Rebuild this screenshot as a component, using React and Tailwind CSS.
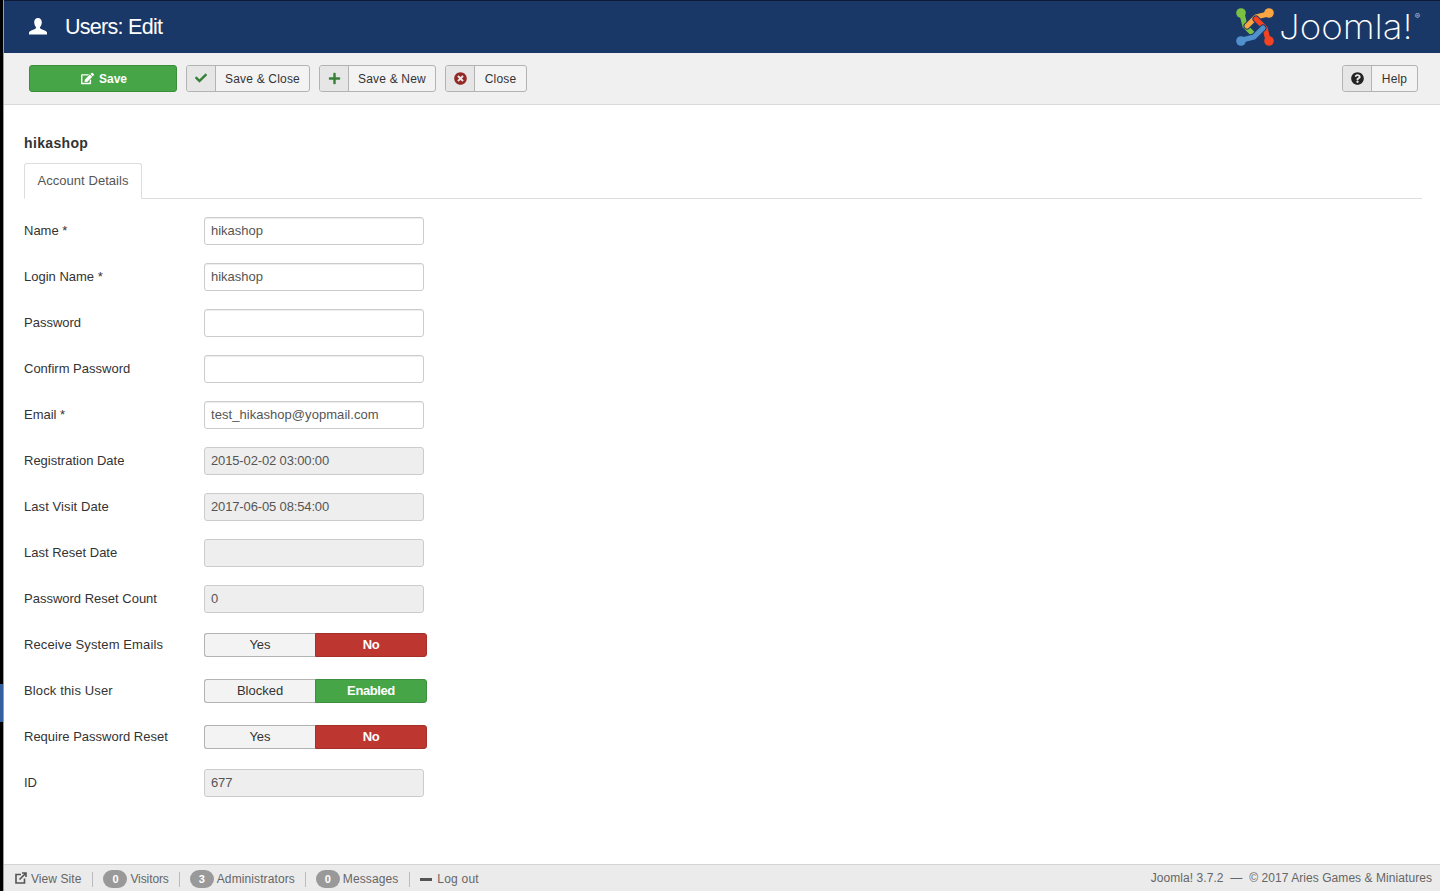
import React from "react";
import { FaEdit, FaCheck, FaPlus, FaTimesCircle, FaQuestionCircle } from "react-icons/fa";

const font = { fontFamily: '"Liberation Sans", Arial, sans-serif' };

const limbs = [
  { d: "M6 6 L9 18 L18 27", c: "#7ac143", x: 5, y: 5 },
  { d: "M32 6 L20 9 L11 18", c: "#f9a541", x: 33, y: 5 },
  { d: "M32 32 L29 20 L20 11", c: "#f44321", x: 33, y: 33 },
  { d: "M6 32 L18 29 L27 20", c: "#5091cd", x: 5, y: 33 },
];

function JoomlaMark() {
  return (
    <svg width="38" height="38" viewBox="0 0 38 38" fill="none" strokeLinecap="round" strokeLinejoin="round">
      {limbs.map((l) => (
        <g key={l.c}>
          <path d={l.d} stroke="#1a3867" strokeWidth="7" />
          <path d={l.d} stroke={l.c} strokeWidth="5.2" />
          <circle cx={l.x} cy={l.y} r="4.8" fill={l.c} />
        </g>
      ))}
    </svg>
  );
}

function ToolButton({ icon, label, width, iconW = "w-[29px]" }) {
  return (
    <div className={`flex h-[27px] ${width} rounded-[3px] border border-[#b3b3b3] bg-[#f3f3f3] text-[12px] text-[#333]`}>
      <span className={`flex ${iconW} shrink-0 items-center justify-center rounded-l-[3px] border-r border-[#b3b3b3] bg-[#e6e6e6]`}>{icon}</span>
      <span className="flex flex-1 items-center justify-center tracking-[0.18px]">{label}</span>
    </div>
  );
}

function Row({ label, labelClass = "", children }) {
  return (
    <div className="mb-[18px] flex h-[28px] items-center">
      <label className={`w-[180px] shrink-0 ${labelClass}`}>{label}</label>
      {children}
    </div>
  );
}

function Field({ value = "", disabled, valueClass = "" }) {
  return (
    <div className={`flex h-[28px] w-[220px] items-center rounded-[3px] border border-[#ccc] px-[6px] ${valueClass} ${disabled ? "bg-[#eeeeee] text-[#555]" : "bg-white text-[#555] shadow-[inset_0_1px_1px_rgba(0,0,0,0.075)]"}`}>
      {value}
    </div>
  );
}

function Toggle({ left, right, color }) {
  return (
    <div className="flex h-[24px] w-[223px] text-[#333]">
      <span className="flex w-[111px] items-center justify-center rounded-l-[3px] border border-r-0 border-[#b3b3b3] bg-[#f3f3f3]">{left}</span>
      <span className={`flex w-[112px] items-center justify-center rounded-r-[3px] border font-bold tracking-[-0.4px] text-white ${color}`}>{right}</span>
    </div>
  );
}

function Badge({ n }) {
  return <span className="flex h-[18px] w-[24px] items-center justify-center rounded-[9px] bg-[#999] text-[11px] font-bold text-white">{n}</span>;
}

const Sep = () => <span className="mx-[10px] h-[15px] w-px bg-[#bbb]" />;

export default function App() {
  return (
    <div className="relative flex h-[891px] w-full overflow-hidden bg-white text-[13px] text-[#333]" style={font}>
      <div className="relative w-[3px] shrink-0 bg-black">
        <span className="absolute left-0 top-[684px] h-[38px] w-[3px] bg-[#35609f]" />
      </div>
      <div className="flex min-w-0 flex-1 flex-col border-l border-[#8aa0b8]">
        <header className="flex h-[53px] shrink-0 items-center justify-between border-t border-[#0c1b33] bg-[#1a3867] pl-[25px] pr-[27px]">
          <div className="flex items-center pt-[1px] text-white">
            <svg width="18" height="17" viewBox="0 0 18 17" fill="currentColor" className="-mt-[3px]">
              <path d="M9 0C6.6 0 5.2 1.8 5.2 4.2C5.2 6.2 6 8 7 9C7.2 9.9 6.9 10.5 6 10.9C3.6 11.8 .6 12.5 0 14.4V16.6H18V14.4C17.4 12.5 14.4 11.8 12 10.9C11.1 10.5 10.8 9.9 11 9C12 8 12.8 6.2 12.8 4.2C12.8 1.8 11.4 0 9 0Z" />
            </svg>
            <h1 className="ml-[18px] text-[21.5px] leading-none tracking-[-0.72px]">Users: Edit</h1>
          </div>
          <div className="flex items-center">
            <JoomlaMark />
            <span className="relative ml-[5px] block w-[134px] text-[34px] font-extralight leading-none text-white" style={{ fontFamily: "Inter, sans-serif" }}>
              <span className="block origin-left scale-x-[1.08]">Joomla!</span>
              <span className="absolute -right-[7px] top-[2px] text-[8px] font-normal text-[#b9c6d8]">®</span>
            </span>
          </div>
        </header>

        <div className="flex h-[52px] shrink-0 items-center justify-between border-b border-[#d9d9d9] bg-[#f0f0f0] pl-[25px] pr-[22px]">
          <div className="flex items-center gap-[9px]">
            <div className="flex h-[27px] w-[148px] items-center justify-center gap-[5px] rounded-[3px] border border-[#3a8e3a] bg-[#46a546] pl-[2px] text-[12px] font-bold text-white">
              <FaEdit className="text-[13px]" />
              <span>Save</span>
            </div>
            <ToolButton width="w-[124px]" label="Save & Close" icon={<FaCheck className="-mt-[1px] text-[12px] text-[#378137]" />} />
            <ToolButton width="w-[117px]" label="Save & New" icon={<FaPlus className="-mt-[1px] text-[13px] text-[#378137]" />} />
            <ToolButton width="w-[82px]" label="Close" icon={<FaTimesCircle className="-mt-[1px] text-[13px] text-[#942a25]" />} />
          </div>
          <ToolButton width="w-[76px]" label="Help" icon={<FaQuestionCircle className="-mt-[1px] text-[13px] text-[#222]" />} />
        </div>

        <main className="flex-1 pl-[20px] pr-[18px] pt-[28px]">
          <h2 className="text-[14px] font-bold leading-[20px] tracking-[0.35px]">hikashop</h2>
          <div className="mb-[18px] mt-[10px] flex h-[36px] items-end border-b border-[#ddd]">
            <div className="-mb-px flex h-[36px] w-[118px] items-center justify-center rounded-t-[3px] border border-[#ddd] border-b-white bg-white tracking-[0.05px] text-[#555]">Account Details</div>
          </div>
          <Row label="Name *"><Field value="hikashop" /></Row>
          <Row label="Login Name *"><Field value="hikashop" /></Row>
          <Row label="Password"><Field /></Row>
          <Row label="Confirm Password"><Field /></Row>
          <Row label="Email *"><Field value="test_hikashop@yopmail.com" valueClass="tracking-[0.05px]" /></Row>
          <Row label="Registration Date"><Field disabled value="2015-02-02 03:00:00" valueClass="tracking-[-0.14px]" /></Row>
          <Row label="Last Visit Date" labelClass="tracking-[0.08px]"><Field disabled value="2017-06-05 08:54:00" valueClass="tracking-[-0.14px]" /></Row>
          <Row label="Last Reset Date"><Field disabled /></Row>
          <Row label="Password Reset Count"><Field disabled value="0" /></Row>
          <Row label="Receive System Emails" labelClass="tracking-[0.12px]"><Toggle left="Yes" right="No" color="border-[#a5302a] bg-[#bd362f]" /></Row>
          <Row label="Block this User" labelClass="tracking-[0.14px]"><Toggle left="Blocked" right="Enabled" color="border-[#3d8f3d] bg-[#46a546]" /></Row>
          <Row label="Require Password Reset"><Toggle left="Yes" right="No" color="border-[#a5302a] bg-[#bd362f]" /></Row>
          <Row label="ID"><Field disabled value="677" valueClass="tracking-[-0.14px]" /></Row>
        </main>

        <footer className="flex h-[27px] shrink-0 items-center justify-between border-t border-[#d4d4d4] bg-[#ebebeb] pl-[11px] pr-[8px] text-[12px] text-[#666]">
          <div className="flex items-center pt-[2px]">
            <svg width="12" height="12" viewBox="0 0 12 12" fill="none" stroke="#555" strokeWidth="1.6" className="mr-[4px] -mt-[2px]">
              <path d="M6 2.5H1V11H9.5V6.5" />
              <path d="M4.5 7.5L10.5 1.5M7 1H11V5" />
            </svg>
            <span className="pr-[1px] tracking-[0.07px]">View Site</span>
            <Sep />
            <Badge n="0" /><span className="ml-[3px] tracking-[-0.1px]">Visitors</span>
            <Sep />
            <Badge n="3" /><span className="ml-[3px] tracking-[0.1px]">Administrators</span>
            <Sep />
            <Badge n="0" /><span className="ml-[3px] tracking-[0.1px]">Messages</span>
            <span className="mx-[10px] ml-[11px] h-[15px] w-px bg-[#bbb]" />
            <span className="mr-[5px] h-[3px] w-[12px] bg-[#555]" />
            <span className="tracking-[0.2px]">Log out</span>
          </div>
          <div className="tracking-[0.06px]">Joomla! 3.7.2 &nbsp;—&nbsp; © 2017 Aries Games &amp; Miniatures</div>
        </footer>
      </div>
    </div>
  );
}
